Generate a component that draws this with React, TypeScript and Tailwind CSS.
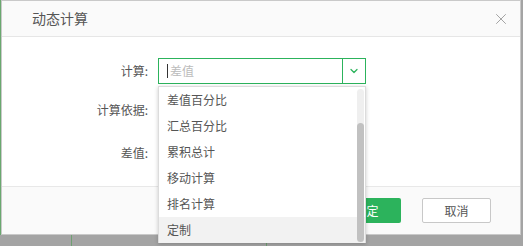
import { X, ChevronDown } from 'lucide-react'

const OPTIONS = ['差值百分比', '汇总百分比', '累积总计', '移动计算', '排名计算', '定制']

const FONT = 'font-["Noto_Sans_CJK_SC","Noto_Sans",sans-serif]'

function Label({ children }: { children: string }) {
  return <div className="w-[156px] shrink-0 pr-[10px] text-right text-[12px] text-[#555]">{children}</div>
}

export default function App() {
  return (
    <div className={`relative w-[523px] h-[246px] overflow-hidden bg-[#a4a4a4] ${FONT}`}>
      <div className="flex h-[235px]">
        <div className="w-px bg-[#6aa86f]" />
        <div className="flex flex-col w-[520px] h-full bg-white border border-[#c9c9c9]">
          {/* Header */}
          <div className="flex items-center justify-between h-[36px] bg-[#fafafa] border-b border-[#e6e6e6] pl-[30px] pr-[10px]">
            <span className="text-[14px] text-[#555]">动态计算</span>
            <X className="w-[18px] h-[18px] text-[#9a9a9a]" strokeWidth={1.2} />
          </div>

          {/* Body */}
          <div className="flex flex-col h-[149px] pt-[21px]">
            <div className="flex items-center h-[26px]">
              <Label>计算:</Label>
              <div className="flex w-[208px] h-[26px] border border-[#2cb35c]">
                <div className="flex items-center flex-1 pl-[8px] text-[12px] text-[#bbb]">
                  <span className="w-px h-[14px] bg-[#333] mr-[2px]" />
                  差值
                </div>
                <div className="flex items-center justify-center w-[23px] border-l border-[#2cb35c]">
                  <ChevronDown className="w-[12px] h-[12px] text-[#2cb35c]" strokeWidth={2.5} />
                </div>
              </div>
            </div>
            <div className="flex items-center h-[26px] mt-[13px]">
              <Label>计算依据:</Label>
            </div>
            <div className="flex items-center h-[26px] mt-[17px]">
              <Label>差值:</Label>
            </div>
          </div>

          {/* Footer */}
          <div className="flex flex-1 justify-end gap-[21px] bg-[#fafafa] border-t border-[#e8e8e8] pt-[11px] pr-[29px]">
            <button className="w-[69px] h-[25px] rounded-[2px] bg-[#2cb35c] text-[12px] text-white">确定</button>
            <button className="w-[69px] h-[25px] rounded-[2px] bg-white border border-[#c8c8c8] text-[12px] text-[#555]">取消</button>
          </div>
        </div>
      </div>

      {/* backdrop strip */}
      <div className="flex h-[11px]">
        <div className="w-[71px]" />
        <div className="w-px bg-[#6fa072]" />
        <div className="w-[194px]" />
        <div className="w-px bg-[#6fa072]" />
      </div>

      {/* Dropdown */}
      <div className="absolute left-[158px] top-[86px] w-[208px] h-[157px] bg-white border border-[#dcdcdc] shadow-[0_1px_4px_rgba(0,0,0,0.2)]">
        {OPTIONS.map((o, i) => (
          <div
            key={o}
            className={`flex items-center h-[26px] pl-[8px] text-[12px] text-[#555] ${i === OPTIONS.length - 1 ? 'bg-[#f2f2f2]' : ''}`}
          >
            {o}
          </div>
        ))}
        <div className="absolute right-[1px] top-[2px] bottom-0 w-[7px] rounded-[4px] bg-[#efefef]">
          <div className="absolute left-0 right-0 top-[34px] bottom-0 rounded-[4px] bg-[#c1c1c1]" />
        </div>
      </div>
    </div>
  )
}
